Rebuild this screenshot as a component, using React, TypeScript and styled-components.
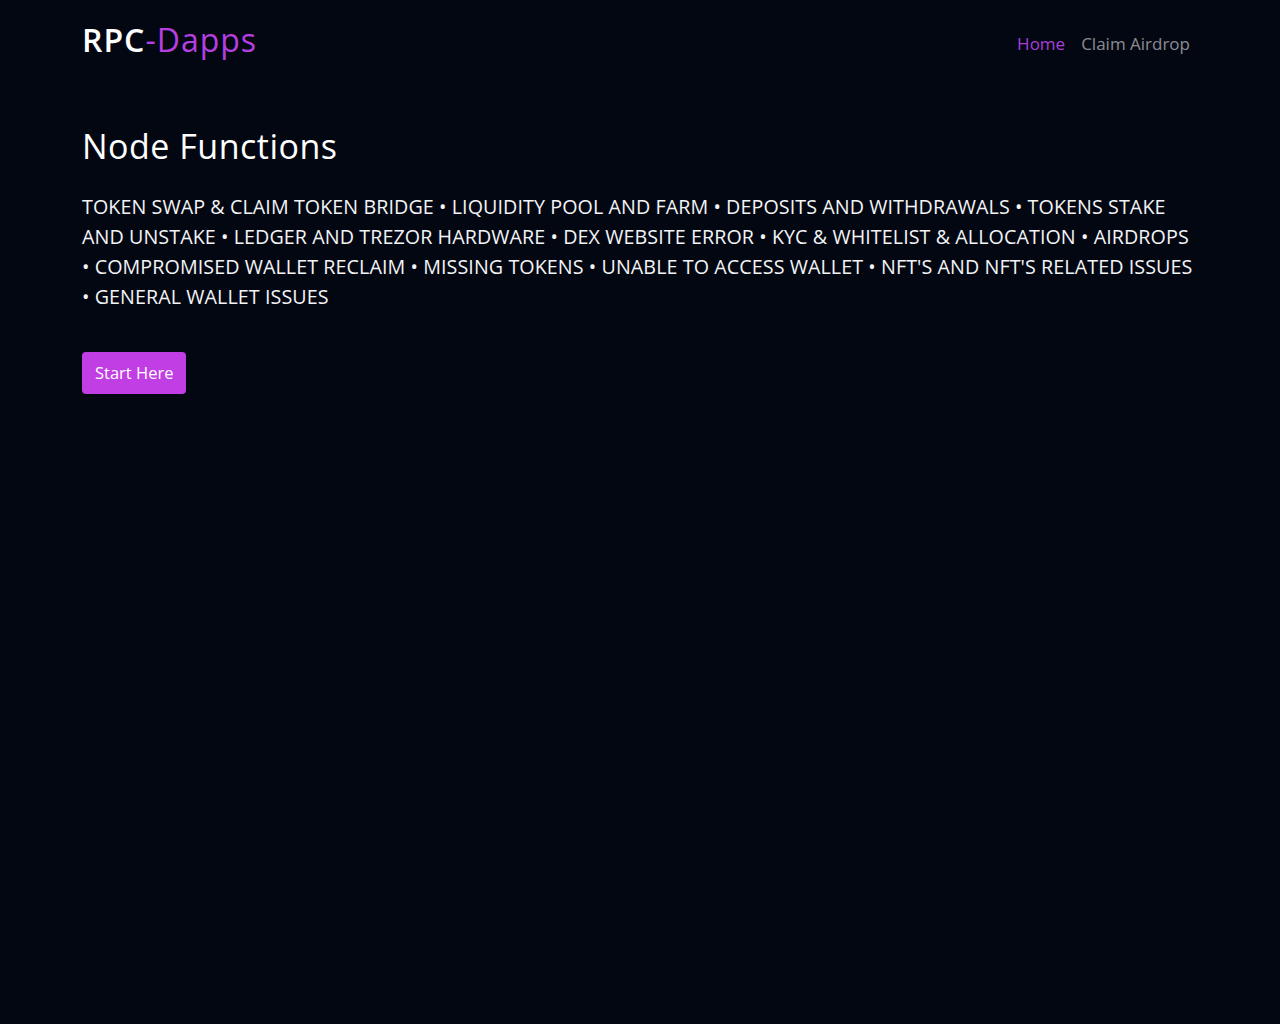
import React from "react";
import styled, { createGlobalStyle } from "styled-components";

const GlobalStyle = createGlobalStyle`
  html, body {
    margin: 0;
    padding: 0;
    background: #030712;
  }
  body {
    font-family: "Open Sans", "Liberation Sans", sans-serif;
    color: #f3f4f6;
    min-height: 1024px;
  }
`;

const services = [
  "TOKEN SWAP & CLAIM TOKEN BRIDGE",
  "LIQUIDITY POOL AND FARM",
  "DEPOSITS AND WITHDRAWALS",
  "TOKENS STAKE AND UNSTAKE",
  "LEDGER AND TREZOR HARDWARE",
  "DEX WEBSITE ERROR",
  "KYC & WHITELIST & ALLOCATION",
  "AIRDROPS",
  "COMPROMISED WALLET RECLAIM",
  "MISSING TOKENS",
  "UNABLE TO ACCESS WALLET",
  "NFT'S AND NFT'S RELATED ISSUES",
  "GENERAL WALLET ISSUES",
];

const App = () => {
  return (
    <>
      <GlobalStyle />
      <Page>
        <Container>
          <Navbar>
            <Brand href="#">
              RPC<BrandAccent>-Dapps</BrandAccent>
            </Brand>
            <NavLinks>
              <NavLink href="#" $active>
                Home
              </NavLink>
              <NavLink href="#">Claim Airdrop</NavLink>
            </NavLinks>
          </Navbar>
          <Hero>
            <Title>Node Functions</Title>
            {/* bullet sticks to the item after it, so lines break before "•" */}
            <Lead>{services.join(" \u2022\u00a0")}</Lead>
            <StartButton type="button">Start Here</StartButton>
          </Hero>
        </Container>
      </Page>
    </>
  );
};

export default App;

const Page = styled.div`
  min-height: 1024px;
  background: #030712;
`;

const Container = styled.div`
  max-width: 1116px;
  margin: 0 auto;
  padding: 0 12px;
`;

const Navbar = styled.nav`
  display: flex;
  align-items: center;
  justify-content: space-between;
  height: 82px;
`;

const Brand = styled.a`
  font-family: "Open Sans", sans-serif;
  font-weight: 600;
  font-size: 32px;
  letter-spacing: 1px;
  color: #ffffff;
  text-decoration: none;
  margin-top: -4px;
`;

const BrandAccent = styled.span`
  color: #b53fe0;
  font-weight: 500;
`;

const NavLinks = styled.div`
  display: flex;
  align-items: center;
  margin-top: 4px;
`;

const NavLink = styled.a<{ $active?: boolean }>`
  font-family: "Open Sans", sans-serif;
  font-size: 17px;
  padding: 8px 8px;
  text-decoration: none;
  color: ${(p) => (p.$active ? "#a93ed9" : "rgba(255, 255, 255, 0.55)")};
`;

const Hero = styled.section`
  padding-top: 44px;
  display: flex;
  flex-direction: column;
  align-items: flex-start;
`;

const Title = styled.h1`
  font-family: "Open Sans", sans-serif;
  font-weight: 500;
  font-size: 34px;
  letter-spacing: 0.5px;
  line-height: 1.2;
  margin: 0 0 25px;
  color: #ffffff;
`;

const Lead = styled.p`
  font-family: "Open Sans", sans-serif;
  font-size: 19.7px;
  letter-spacing: 0.08px;
  line-height: 30px;
  margin: 0 0 40px;
  color: #f3f4f6;
`;

const StartButton = styled.button`
  font-family: "Open Sans", sans-serif;
  font-size: 16.5px;
  color: #ffffff;
  background: #c13ee4;
  border: none;
  border-radius: 4px;
  padding: 0 13px;
  height: 42px;
  cursor: pointer;
`;
